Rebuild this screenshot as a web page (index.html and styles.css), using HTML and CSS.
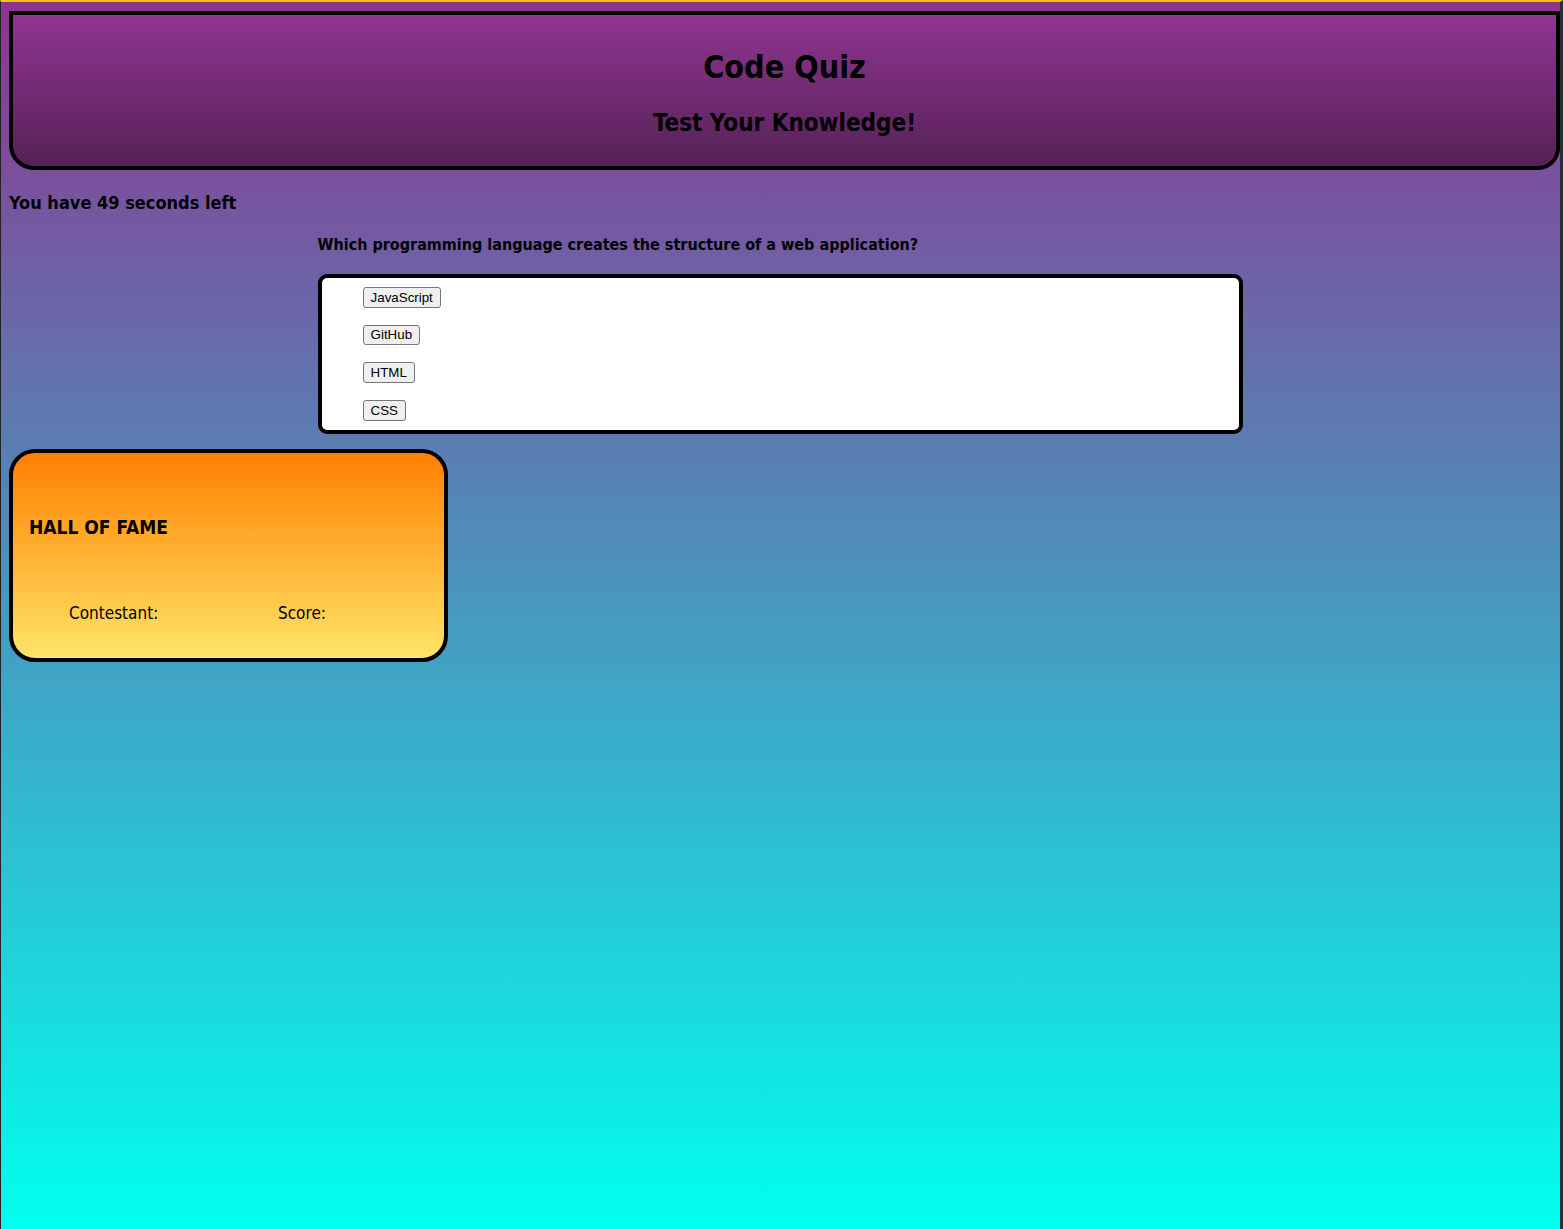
FILE: index.html
```html
<!DOCTYPE html>
<html lang="en">
<head>
<meta charset="utf-8">
<title>Code Quiz</title>
<link rel="stylesheet" href="styles.css">
</head>
<body>
<header class="banner">
  <h1 class="title">Code Quiz</h1>
  <h2 class="subtitle">Test Your Knowledge!</h2>
</header>
<main class="page">
  <p class="timer">You have 49 seconds left</p>
  <section class="quiz">
    <p class="question">Which programming language creates the structure of a web application?</p>
    <ul class="answers">
      <li><button class="answer">JavaScript</button></li>
      <li><button class="answer">GitHub</button></li>
      <li><button class="answer">HTML</button></li>
      <li><button class="answer">CSS</button></li>
    </ul>
  </section>
  <section class="fame">
    <h3 class="fame-title">HALL OF FAME</h3>
    <div class="fame-cols">
      <span class="fame-col">Contestant:</span>
      <span class="fame-col">Score:</span>
    </div>
  </section>
</main>
</body>
</html>
```
FILE: styles.css
```css
html {
  height: 100%;
  background: #000;
}
body {
  margin: 0;
  min-height: calc(100% - 2px);
  border-top: 2px solid #f5c400;
  border-left: 1px solid #222;
  border-right: 3px solid #2a2d33;
  background: linear-gradient(#8e3490, #00fff0);
  font-family: "DejaVu Sans Condensed", "DejaVu Sans", Verdana, sans-serif;
  color: #000;
  overflow: hidden;
}
.banner {
  margin: 9px 0 0 8px;
  height: 151px;
  border: 4px solid #000;
  border-radius: 0 0 22px 25px;
  background: linear-gradient(#8f3590, #552256);
  text-align: center;
  display: flex;
  flex-direction: column;
  align-items: center;
}
.title {
  font-size: 32px;
  margin: 32px 0 0;
  line-height: 40px;
}
.subtitle {
  font-size: 24px;
  margin: 21px 0 0;
  line-height: 30px;
}
.page {
  margin: 0 8px;
}
.timer {
  margin: 21px 0 0;
  font-size: 18px;
  font-weight: bold;
  line-height: 24px;
}
.quiz {
  margin: 0 20%;
}
.question {
  font-size: 16px;
  font-weight: bold;
  margin: 19px 0 0;
  line-height: 22px;
}
.answers {
  list-style: none;
  margin: 18px 0 0;
  padding: 9px 0 9px 41px;
  border: 4px solid #000;
  border-radius: 9px;
  background: #fff;
  display: flex;
  flex-direction: column;
  align-items: flex-start;
  gap: 17.2px;
}
.answers li {
  display: block;
}
.answer {
  box-sizing: border-box;
  font-family: "Liberation Sans", Arial, sans-serif;
  font-size: 13.33px;
  height: 20.5px;
  padding: 0 7px;
  border: 1px solid #767676;
  border-radius: 3px;
  background: #efefef;
  color: #000;
  display: block;
}
.fame {
  margin: 15px 0 0;
  width: 431px;
  height: 205px;
  border: 4px solid #000;
  border-radius: 26px;
  background: linear-gradient(#ff8000, #ffe567);
}
.fame-title {
  margin: 62px 0 0 16px;
  font-size: 19px;
  line-height: 24px;
}
.fame-cols {
  margin: 63px 0 0 56px;
  display: flex;
  font-size: 17px;
  line-height: 22px;
}
.fame-col {
  flex: 0 0 209px;
}
```
